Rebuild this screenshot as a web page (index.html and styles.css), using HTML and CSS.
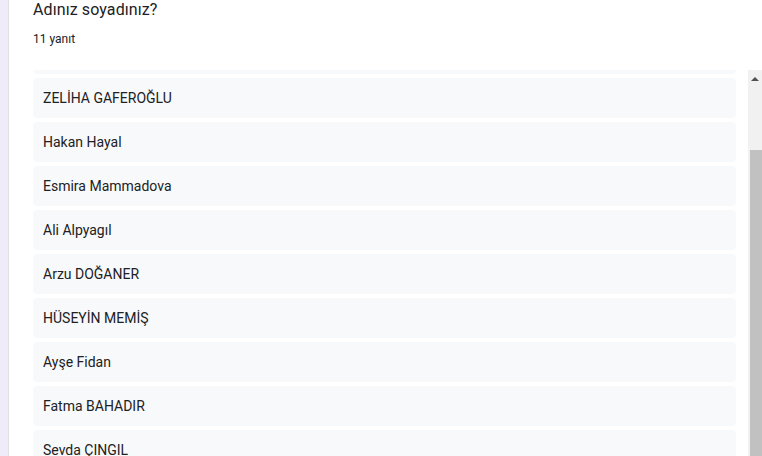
FILE: index.html
```html
<!DOCTYPE html>
<html lang="tr">
<head>
    <meta charset="UTF-8">
    <meta name="viewport" content="width=device-width, initial-scale=1.0">
    <title>Adınız soyadınız?</title>
    <link rel="stylesheet" href="styles.css">
</head>
<body>
    <div class="side"></div>
    <div class="card">
        <h2 class="question">Adınız soyadınız?</h2>
        <div class="count">11 yanıt</div>

        <div class="answers">
            <div class="list">
                <div class="item"></div>
                <div class="item">ZELİHA GAFEROĞLU</div>
                <div class="item">Hakan Hayal</div>
                <div class="item">Esmira Mammadova</div>
                <div class="item">Ali Alpyagıl</div>
                <div class="item">Arzu DOĞANER</div>
                <div class="item">HÜSEYİN MEMİŞ</div>
                <div class="item">Ayşe Fidan</div>
                <div class="item">Fatma BAHADIR</div>
                <div class="item">Sevda ÇINGIL</div>
            </div>
            <div class="scrollbar">
                <div class="arrow"></div>
                <div class="thumb"></div>
            </div>
        </div>
    </div>
</body>
</html>
```

FILE: styles.css
```css
body {
    margin: 0;
    display: flex;
    height: 456px;
    overflow: hidden;
    font-family: Roboto, "Liberation Sans", sans-serif;
    color: #202124;
    background-color: #fff;
}

.side {
    width: 8px;
    flex-shrink: 0;
    background-color: #f0ebf8;
    border-right: 1px solid #e0e0e0;
}

.card {
    flex: 1;
    padding-left: 24px;
}

.question {
    margin: -2px 0 0;
    font-size: 16px;
    font-weight: 400;
    line-height: 24px;
    letter-spacing: 0.1px;
}

.count {
    margin-top: 9px;
    font-size: 12px;
    line-height: 16px;
}

.answers {
    display: flex;
    gap: 12px;
    margin-top: 23px;
    height: 400px;
}

.list {
    flex: 1;
    overflow: hidden;
    display: flex;
    flex-direction: column;
    gap: 4px;
}

.item {
    flex-shrink: 0;
    height: 40px;
    padding-left: 10px;
    border-radius: 4px;
    background-color: #f8f9fa;
    font-size: 14px;
    line-height: 40px;
}

.item:first-child {
    margin-top: -36px;
}

.scrollbar {
    width: 14px;
    flex-shrink: 0;
    background-color: #f1f1f1;
    display: flex;
    flex-direction: column;
    align-items: flex-end;
}

.arrow {
    align-self: center;
    margin-top: 7px;
    width: 0;
    height: 0;
    border-left: 4px solid transparent;
    border-right: 4px solid transparent;
    border-bottom: 4px solid #505050;
}

.thumb {
    margin-top: 69px;
    width: 12px;
    flex: 1;
    background-color: #c1c1c1;
}
```
